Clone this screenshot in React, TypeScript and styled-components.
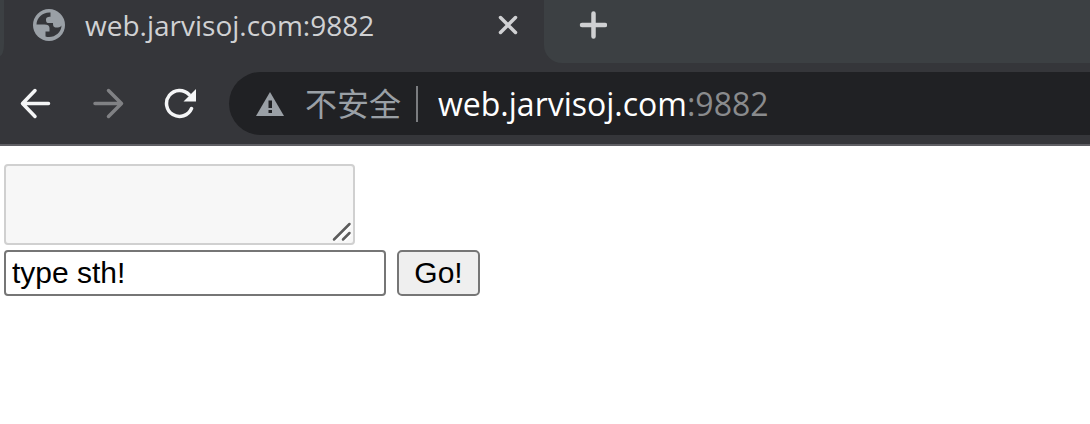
import React from "react";
import styled, { createGlobalStyle } from "styled-components";

const GlobalStyle = createGlobalStyle`
  * { box-sizing: border-box; }
  body { margin: 0; background: #ffffff; overflow-x: hidden; }
`;

const uiFont = `"Open Sans", "Noto Sans CJK SC", sans-serif`;

const Browser = styled.header`
  background: #35363a;
  border-bottom: 2px solid #5f5f64;
  font-family: ${uiFont};
  overflow: hidden;
`;

const TabStrip = styled.div`
  display: flex;
  height: 63px;
`;

const PreviousTab = styled.div`
  flex: none;
  width: 4px;
  height: 56px;
  background: #3c4043;
  border-bottom-right-radius: 4px 12px;
`;

const ActiveTab = styled.div`
  flex: none;
  display: flex;
  align-items: center;
  width: 540px;
  height: 50px;
  padding: 0 20px 0 29px;
`;

const TabTitle = styled.span`
  flex: 1;
  margin-left: 20px;
  font-size: 28px;
  line-height: 40px;
  color: #d0d1d3;
  white-space: nowrap;
`;

const StripRest = styled.div`
  flex: 1;
  padding: 9px 0 0 33px;
  background: #3c4043;
  border-bottom-left-radius: 18px;
`;

const IconButton = styled.button`
  flex: none;
  display: flex;
  align-items: center;
  justify-content: center;
  width: 32px;
  height: 32px;
  padding: 0;
  border: 0;
  background: none;
`;

const Toolbar = styled.nav`
  display: flex;
  align-items: center;
  gap: 40px;
  padding: 9px 0 9px 20px;
`;

const AddressBar = styled.div`
  flex: 1;
  display: flex;
  align-items: center;
  height: 63px;
  margin-left: -7px;
  padding-left: 26px;
  background: #202124;
  border-radius: 32px 0 0 32px;
  white-space: nowrap;
`;

const Security = styled.span`
  margin-left: 20px;
  padding-right: 15px;
  font-size: 32px;
  line-height: 36px;
  color: #9aa0a6;
  border-right: 2px solid #7b7d80;
`;

const Url = styled.span`
  margin-left: 20px;
  font-size: 32px;
  line-height: 40px;
  color: #ffffff;
`;

const Port = styled.span`
  color: #8a8b8d;
`;

const Page = styled.main`
  padding: 18px 4px;
`;

const OutputBox = styled.div`
  position: relative;
  width: 351px;
  height: 81px;
`;

const Output = styled.textarea`
  display: block;
  width: 100%;
  height: 100%;
  padding: 4px;
  border: 2px solid #d0d0d0;
  border-radius: 4px;
  background: #f7f7f7;
  font: 30px "Liberation Mono", monospace;
  resize: none;
`;

const Grip = styled.svg`
  position: absolute;
  right: 3px;
  bottom: 3px;
`;

const Form = styled.form`
  display: flex;
  gap: 11px;
  margin-top: 5px;
`;

const TextInput = styled.input`
  width: 382px;
  height: 46px;
  padding: 0 6px;
  border: 2px solid #767676;
  border-radius: 4px;
  background: #ffffff;
  color: #000000;
  font: 30px "Liberation Sans", sans-serif;
  outline: none;
`;

const GoButton = styled.button`
  width: 83px;
  height: 46px;
  padding: 0;
  border: 2px solid #767676;
  border-radius: 5px;
  background: #efefef;
  color: #000000;
  font: 30px "Liberation Sans", sans-serif;
`;

const Globe = () => (
  <svg width="32" height="32" viewBox="0 0 32 32" aria-hidden="true">
    <circle cx="16" cy="16" r="16" fill="#9aa0a6" />
    <path
      d="M17.5 3.6C10 3 3.8 8.5 3.5 15.5H11.5C14.5 15.5 16.5 16.5 16.5 19V22.5H12.5V27.5C20 30 28.5 24 28.5 16.5C27 18.5 25.500 18.500 23.500 18.500C20.500 18.500 20 17 20 14H15C13.500 14 13 12.500 13 11C13 9 14 7.800 17.500 7.800Z"
      fill="#35363a"
    />
  </svg>
);

const Arrow = ({ back }: { back?: boolean }) => (
  <svg width="32" height="32" viewBox="0 0 32 32" fill="none" aria-hidden="true">
    <path
      d={back ? "M28.5 15.5H3M15 2.5L2.5 15.5L15 28.5" : "M3 15.5H29M16.5 2.5L29.5 15.5L16.5 28.5"}
      stroke={back ? "#f4f5f6" : "#808184"}
      strokeWidth="3.5"
      strokeLinecap="round"
      strokeLinejoin="round"
    />
  </svg>
);

export default function App() {
  return (
    <>
      <GlobalStyle />
      <Browser>
        <TabStrip>
          <PreviousTab />
          <ActiveTab>
            <Globe />
            <TabTitle>web.jarvisoj.com:9882</TabTitle>
            <IconButton type="button" aria-label="Close tab">
              <svg width="20" height="20" viewBox="0 0 20 20" aria-hidden="true">
                <path d="M2.5 2.5L17.5 17.5M17.5 2.5L2.5 17.5" stroke="#d0d1d3" strokeWidth="3.5" strokeLinecap="round" />
              </svg>
            </IconButton>
          </ActiveTab>
          <StripRest>
            <IconButton type="button" aria-label="New tab">
              <svg width="28" height="28" viewBox="0 0 28 28" aria-hidden="true">
                <path d="M14.5 2.5V25.5M3 14H26" stroke="#cfd0d2" strokeWidth="4.5" strokeLinecap="round" />
              </svg>
            </IconButton>
          </StripRest>
        </TabStrip>
        <Toolbar>
          <IconButton type="button" aria-label="Back">
            <Arrow back />
          </IconButton>
          <IconButton type="button" aria-label="Forward">
            <Arrow />
          </IconButton>
          <IconButton type="button" aria-label="Reload">
            <svg width="32" height="32" viewBox="0 0 32 32" aria-hidden="true">
              <path d="M27.5 20.5A13 13 0 1 1 25 6.5" fill="none" stroke="#f4f5f6" strokeWidth="3.5" strokeLinecap="round" />
              <path d="M32 1V13.5H19.5Z" fill="#f4f5f6" />
            </svg>
          </IconButton>
          <AddressBar>
            <svg width="30" height="26" viewBox="0 0 30 26" aria-hidden="true">
              <path d="M15 1L29 25H1Z" fill="#9aa0a6" />
              <path d="M13.5 9.5H17V17H13.5ZM13.5 19H17V22H13.5Z" fill="#202124" />
            </svg>
            <Security>不安全</Security>
            <Url>
              web.jarvisoj.com<Port>:9882</Port>
            </Url>
          </AddressBar>
        </Toolbar>
      </Browser>
      <Page>
        <OutputBox>
          <Output disabled aria-label="Output" />
          <Grip width="20" height="20" viewBox="0 0 20 20" aria-hidden="true">
            <path d="M3.5 19L19 3.5M12.5 19L19 12.5" stroke="#ffffff" strokeWidth="2" />
            <path d="M2 17.5L17.5 2M11 17.5L17.5 11" stroke="#5c5c5c" strokeWidth="2.5" strokeLinecap="round" />
          </Grip>
        </OutputBox>
        <Form onSubmit={(e: React.FormEvent) => e.preventDefault()}>
          <TextInput type="text" aria-label="Message" defaultValue="type sth!" />
          <GoButton type="submit">Go!</GoButton>
        </Form>
      </Page>
    </>
  );
}
